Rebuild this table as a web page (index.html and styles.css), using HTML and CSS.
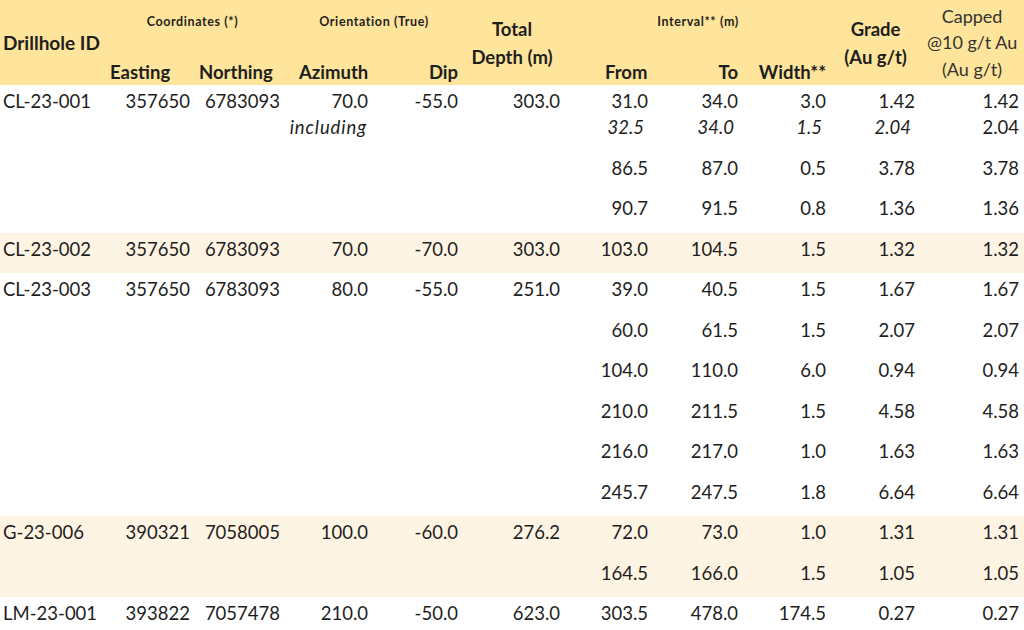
FILE: index.html
```html
<!DOCTYPE html>
<html>
<head>
<meta charset="utf-8">
<link rel="stylesheet" href="styles.css">
</head>
<body>
<table class="tbl">
  <colgroup>
    <col class="c-id"><col class="c-e"><col class="c-n"><col class="c-az"><col class="c-dip"><col class="c-td"><col class="c-from"><col class="c-to"><col class="c-w"><col class="c-g"><col class="c-cap">
  </colgroup>
  <thead>
    <tr class="ha">
      <th rowspan="2" class="h-id">Drillhole ID</th>
      <th colspan="2" class="grp">Coordinates (*)</th>
      <th colspan="2" class="grp">Orientation (True)</th>
      <th rowspan="2" class="big tdh">Total<br>Depth (m)</th>
      <th colspan="3" class="grp">Interval** (m)</th>
      <th rowspan="2" class="big">Grade<br>(Au g/t)</th>
      <th rowspan="2" class="cap">Capped<br>@10 g/t Au<br>(Au g/t)</th>
    </tr>
    <tr class="hb">
      <th class="sub sub-e">Easting</th>
      <th class="sub sub-n">Northing</th>
      <th class="sub sub-l">Azimuth</th>
      <th class="sub">Dip</th>
      <th class="sub sub-l2">From</th>
      <th class="sub">To</th>
      <th class="sub">Width**</th>
    </tr>
  </thead>
  <tbody>
    <tr class="first">
      <td class="id">CL-23-001</td><td>357650</td><td>6783093</td><td>70.0</td><td>-55.0</td><td>303.0</td><td>31.0</td><td>34.0</td><td>3.0</td><td>1.42</td><td>1.42</td>
    </tr>
    <tr class="incl">
      <td class="id"></td><td></td><td></td><td class="it inc">including</td><td></td><td></td><td class="it">32.5</td><td class="it">34.0</td><td class="it">1.5</td><td class="it">2.04</td><td>2.04</td>
    </tr>
    <tr>
      <td class="id"></td><td></td><td></td><td></td><td></td><td></td><td>86.5</td><td>87.0</td><td>0.5</td><td>3.78</td><td>3.78</td>
    </tr>
    <tr>
      <td class="id"></td><td></td><td></td><td></td><td></td><td></td><td>90.7</td><td>91.5</td><td>0.8</td><td>1.36</td><td>1.36</td>
    </tr>
    <tr class="hl">
      <td class="id">CL-23-002</td><td>357650</td><td>6783093</td><td>70.0</td><td>-70.0</td><td>303.0</td><td>103.0</td><td>104.5</td><td>1.5</td><td>1.32</td><td>1.32</td>
    </tr>
    <tr>
      <td class="id">CL-23-003</td><td>357650</td><td>6783093</td><td>80.0</td><td>-55.0</td><td>251.0</td><td>39.0</td><td>40.5</td><td>1.5</td><td>1.67</td><td>1.67</td>
    </tr>
    <tr>
      <td class="id"></td><td></td><td></td><td></td><td></td><td></td><td>60.0</td><td>61.5</td><td>1.5</td><td>2.07</td><td>2.07</td>
    </tr>
    <tr>
      <td class="id"></td><td></td><td></td><td></td><td></td><td></td><td>104.0</td><td>110.0</td><td>6.0</td><td>0.94</td><td>0.94</td>
    </tr>
    <tr>
      <td class="id"></td><td></td><td></td><td></td><td></td><td></td><td>210.0</td><td>211.5</td><td>1.5</td><td>4.58</td><td>4.58</td>
    </tr>
    <tr>
      <td class="id"></td><td></td><td></td><td></td><td></td><td></td><td>216.0</td><td>217.0</td><td>1.0</td><td>1.63</td><td>1.63</td>
    </tr>
    <tr>
      <td class="id"></td><td></td><td></td><td></td><td></td><td></td><td>245.7</td><td>247.5</td><td>1.8</td><td>6.64</td><td>6.64</td>
    </tr>
    <tr class="hl">
      <td class="id">G-23-006</td><td>390321</td><td>7058005</td><td>100.0</td><td>-60.0</td><td>276.2</td><td>72.0</td><td>73.0</td><td>1.0</td><td>1.31</td><td>1.31</td>
    </tr>
    <tr class="hl">
      <td class="id"></td><td></td><td></td><td></td><td></td><td></td><td>164.5</td><td>166.0</td><td>1.5</td><td>1.05</td><td>1.05</td>
    </tr>
    <tr>
      <td class="id">LM-23-001</td><td>393822</td><td>7057478</td><td>210.0</td><td>-50.0</td><td>623.0</td><td>303.5</td><td>478.0</td><td>174.5</td><td>0.27</td><td>0.27</td>
    </tr>
  </tbody>
</table>
</body>
</html>
```

FILE: styles.css
```css
html, body {
  margin: 0;
  padding: 0;
  background: #ffffff;
}
body {
  font-family: Lato, "Open Sans", sans-serif;
  color: #1e1e1e;
  overflow: hidden;
}
.tbl {
  width: 1024px;
  table-layout: fixed;
  border-collapse: collapse;
  border-spacing: 0;
}
.c-id { width: 100px; }
.c-e { width: 95px; }
.c-n { width: 90px; }
.c-az { width: 88px; }
.c-dip { width: 90px; }
.c-td { width: 102px; }
.c-from { width: 88px; }
.c-to { width: 90px; }
.c-w { width: 88px; }
.c-g { width: 89px; }
.c-cap { width: 104px; }

thead th {
  background: #ffe59b;
  padding: 0;
  font-weight: 700;
  color: #1e1e1e;
  white-space: nowrap;
}
.ha th { height: 43px; }
.hb th { height: 39px; }
.h-id {
  text-align: left;
  padding-left: 3px;
  font-size: 19px;
  vertical-align: middle;
}
.grp {
  font-size: 12.5px;
  letter-spacing: 0.6px;
  vertical-align: middle;
  text-align: center;
}
.big {
  font-size: 18.5px;
  line-height: 28px;
  vertical-align: middle;
  text-align: center;
}
.tdh { padding-right: 4px; }
.cap {
  font-weight: 400;
  font-size: 18px;
  line-height: 26.5px;
  vertical-align: middle;
  text-align: center;
  color: #333;
}
.sub {
  font-size: 18.5px;
  line-height: 20px;
  vertical-align: bottom;
  text-align: right;
  padding: 0 5px 3px 0;
}
.sub-e { text-align: left; padding-left: 10px; }
.sub-n { text-align: left; padding-left: 4px; }
.sub-l { text-align: left; padding-left: 14px; }
.sub-l2 { text-align: left; padding-left: 40px; }

tbody td {
  font-size: 18.5px;
  line-height: 20px;
  height: 34.5px;
  padding: 6px 5px 0 0;
  vertical-align: top;
  text-align: right;
  white-space: nowrap;
}
tbody tr.first td { height: 20px; }
tbody td.id {
  text-align: left;
  padding-left: 3px;
}
tbody td.it {
  font-style: italic;
  padding-right: 9px;
}
tbody td.inc {
  letter-spacing: 0.9px;
  padding-right: 6px;
}
tbody tr.hl td { background: #fef4e3; }
```
